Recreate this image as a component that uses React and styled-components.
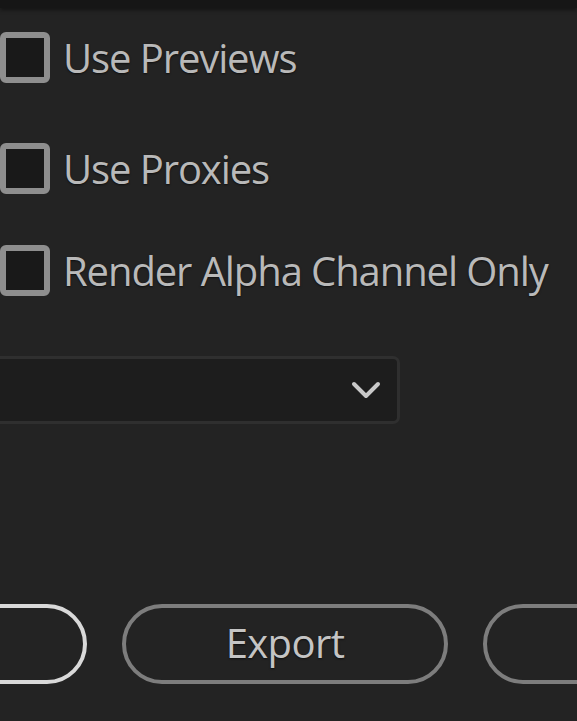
import styled, { createGlobalStyle } from "styled-components";

const GlobalStyle = createGlobalStyle`
    html, body {
        margin: 0;
        padding: 0;
        background: #232323;
        overflow: hidden;
    }
    body {
        font-family: "Open Sans", "Noto Sans", sans-serif;
    }
`;

const Page = styled.div`
    width: 577px;
    height: 721px;
    background: #232323;
    display: flex;
    flex-direction: column;
    overflow: hidden;
`;

const TopBar = styled.div`
    height: 8px;
    flex-shrink: 0;
    background: #161616;
    box-shadow: 0 2px 4px rgba(0, 0, 0, 0.45);
`;

const Options = styled.div`
    display: flex;
    flex-direction: column;
    margin-top: 24px;
`;

const Row = styled.label`
    display: flex;
    align-items: center;
    gap: 13px;
    margin-top: ${(p) => p.$gap || 0}px;
    cursor: pointer;
`;

const Box = styled.span`
    box-sizing: border-box;
    width: 50px;
    height: 51px;
    flex-shrink: 0;
    border: 6px solid #8e8e8e;
    border-radius: 6px;
    background: #191919;
`;

const Label = styled.span`
    font-size: 40px;
    font-weight: 500;
    color: #b9b9b9;
    letter-spacing: -1.1px;
    line-height: 1;
    text-shadow: 0 1px 2px rgba(0, 0, 0, 0.6);
`;

const Select = styled.div`
    box-sizing: border-box;
    margin-top: 60px;
    margin-left: -20px;
    width: 420px;
    height: 68px;
    display: flex;
    align-items: center;
    justify-content: flex-end;
    padding-right: 16px;
    background: #1d1d1d;
    border: 3px solid #2f2f2f;
    border-radius: 7px;
`;

const Buttons = styled.div`
    display: flex;
    gap: 35px;
    margin-top: 180px;
    margin-left: -239px;
`;

const Button = styled.button`
    box-sizing: border-box;
    width: 326px;
    height: 80px;
    flex-shrink: 0;
    border-radius: 40px;
    border: 4px solid ${(p) => (p.$primary ? "#d9d9d9" : "#7d7d7d")};
    background: #232323;
    color: #c4c4c4;
    font-family: "Open Sans", "Noto Sans", sans-serif;
    font-size: 40px;
    font-weight: 500;
    letter-spacing: -0.6px;
    padding: 0 0 4px;
    text-shadow: 0 1px 2px rgba(0, 0, 0, 0.6);
`;

const Checkbox = ({ label, gap }) => (
    <Row $gap={gap}>
        <Box />
        <Label>{label}</Label>
    </Row>
);

export default function App() {
    return (
        <Page>
            <GlobalStyle />
            <TopBar />
            <Options>
                <Checkbox label="Use Previews" />
                <Checkbox label="Use Proxies" gap={60} />
                <Checkbox label="Render Alpha Channel Only" gap={51} />
            </Options>
            <Select>
                <svg width="30" height="19" viewBox="0 0 30 19">
                    <path d="M3 3 L15 15 L27 3" fill="none" stroke="#c9c9c9" strokeWidth="4" strokeLinecap="round" strokeLinejoin="round" />
                </svg>
            </Select>
            <Buttons>
                <Button $primary></Button>
                <Button>Export</Button>
                <Button></Button>
            </Buttons>
        </Page>
    );
}
